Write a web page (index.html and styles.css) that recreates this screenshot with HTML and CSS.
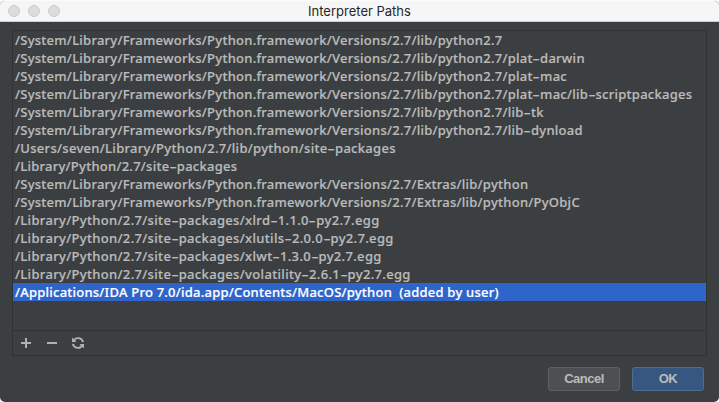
FILE: index.html
```html
<!DOCTYPE html>
<html lang="en">
<head>
<meta charset="utf-8">
<title>Interpreter Paths</title>
<link rel="stylesheet" href="styles.css">
</head>
<body>
<main class="window">
  <header class="titlebar">
    <div class="lights"><i></i><i></i><i></i></div>
    <h1>Interpreter Paths</h1>
  </header>
  <section class="panel">
    <ul class="paths">
      <li>/System/Library/Frameworks/Python.framework/Versions/2.7/lib/python2.7</li>
      <li>/System/Library/Frameworks/Python.framework/Versions/2.7/lib/python2.7/plat<b>-</b>darwin</li>
      <li>/System/Library/Frameworks/Python.framework/Versions/2.7/lib/python2.7/plat<b>-</b>mac</li>
      <li>/System/Library/Frameworks/Python.framework/Versions/2.7/lib/python2.7/plat<b>-</b>mac/lib<b>-</b>scriptpackages</li>
      <li>/System/Library/Frameworks/Python.framework/Versions/2.7/lib/python2.7/lib<b>-</b>tk</li>
      <li>/System/Library/Frameworks/Python.framework/Versions/2.7/lib/python2.7/lib<b>-</b>dynload</li>
      <li class="user">/Users/seven/Library/Python/2.7/lib/python/site<b>-</b>packages</li>
      <li>/Library/Python/2.7/site<b>-</b>packages</li>
      <li>/System/Library/Frameworks/Python.framework/Versions/2.7/Extras/lib/python</li>
      <li>/System/Library/Frameworks/Python.framework/Versions/2.7/Extras/lib/python/PyObjC</li>
      <li class="egg">/Library/Python/2.7/site<b>-</b>packages/xlrd<b>-</b>1.1.0<b>-</b>py2.7.egg</li>
      <li class="egg">/Library/Python/2.7/site<b>-</b>packages/xlutils<b>-</b>2.0.0<b>-</b>py2.7.egg</li>
      <li class="egg">/Library/Python/2.7/site<b>-</b>packages/xlwt<b>-</b>1.3.0<b>-</b>py2.7.egg</li>
      <li class="egg">/Library/Python/2.7/site<b>-</b>packages/volatility<b>-</b>2.6.1<b>-</b>py2.7.egg</li>
      <li class="selected">/Applications/IDA Pro 7.0/ida.app/Contents/MacOS/python&nbsp; (added by user)</li>
    </ul>
    <div class="toolbar">
      <svg viewBox="0 0 16 16"><path d="M8 3v10M3 8h10" stroke="#afb1b3" stroke-width="2"/></svg>
      <svg viewBox="0 0 16 16"><path d="M3 8h10" stroke="#afb1b3" stroke-width="2"/></svg>
      <svg viewBox="0 0 16 16"><path d="M3.700 6A4.900 4.900 0 0 1 13 7.200M12.300 10A4.900 4.900 0 0 1 3 8.800" fill="none" stroke="#afb1b3" stroke-width="1.900"/><path d="M2 2.500V7h4.500zM14 13.500V9H9.500z" fill="#afb1b3"/></svg>
    </div>
  </section>
  <footer class="actions">
    <button>Cancel</button>
    <button class="primary">OK</button>
  </footer>
</main>
</body>
</html>
```

FILE: styles.css
```css
* { box-sizing: border-box; }
body { margin: 0; background: #fff; }
.window {
  height: 402px;
  display: flex;
  flex-direction: column;
  background: #3c3f41;
  border-radius: 5px;
  overflow: hidden;
  border-top: 1px solid #fcfcfc;
}
.titlebar {
  height: 21px;
  flex: none;
  display: grid;
  grid-template-columns: 80px 1fr 80px;
  background: #f6f6f6;
  border-bottom: 1px solid #cfcfcf;
}
.lights { display: flex; gap: 8px; padding: 4px 0 0 8px; }
.lights i {
  width: 12px;
  height: 12px;
  border-radius: 50%;
  background: #dcdcdc;
  border: 1px solid #cbcbcb;
}
h1 {
  margin: 0;
  text-align: center;
  font: 400 13px/21px Inter, sans-serif;
  color: #262626;
}
.panel {
  flex: none;
  height: 326px;
  margin: 8px 12px 0;
  border: 1px solid #323232;
  display: flex;
  flex-direction: column;
}
.paths {
  flex: 1;
  margin: 0;
  padding: 0;
  list-style: none;
  font: 500 13px/18px "Noto Sans", sans-serif;
  letter-spacing: 0.255px;
  color: #bbb;
  -webkit-text-stroke: 0.2px;
}
.paths li { height: 18px; padding-left: 2px; white-space: nowrap; }
.paths .user { letter-spacing: 0.3px; }
.paths .egg { letter-spacing: 0.33px; }
.paths .selected { background: #2f65ca; color: #fff; letter-spacing: 0.23px; }
/* wide hyphen */
.paths b {
  display: inline-block;
  margin: 0 1.5px;
  font-weight: 500;
  transform: scaleX(1.7);
}
.toolbar {
  height: 25px;
  border-top: 1px solid #323232;
  display: flex;
  gap: 10px;
  padding: 4px 5px;
}
.toolbar svg { width: 16px; height: 16px; }
.actions { display: flex; justify-content: flex-end; gap: 12px; padding: 11px 15px 0; }
button {
  width: 72px;
  height: 24px;
  padding: 0;
  border: 1px solid #5e6060;
  border-radius: 3px;
  background: #4c5052;
  color: #bbb;
  font: 700 13px/22px "Liberation Sans", sans-serif;
  letter-spacing: -0.5px;
}
.primary { background: #365880; border-color: #4c708c; }
```
